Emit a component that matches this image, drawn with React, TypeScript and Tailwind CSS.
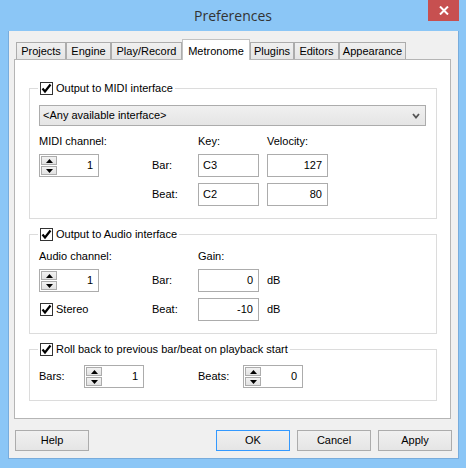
import React from "react";

const Check = () => (
  <span className="flex h-[13px] w-[13px] shrink-0 items-center justify-center border border-[#333333] bg-white">
    <svg width="11" height="11" viewBox="0 0 11 11">
      <path d="M1.5 5.5 L4 8.5 L9.5 1.5" fill="none" stroke="#000" strokeWidth="2.2" strokeLinejoin="miter" />
    </svg>
  </span>
);

const Legend = ({ children }: { children: React.ReactNode }) => (
  <legend className="ml-[8px] h-[16px] px-[2px]">
    <span className="flex h-[16px] items-center gap-[3px]">
      <Check />
      <span className="leading-[13px]">{children}</span>
    </span>
  </legend>
);

const Tri = ({ up }: { up?: boolean }) => (
  <svg width="7" height="4" viewBox="0 0 7 4">
    {up ? <path d="M0 4 L3.5 0 L7 4 Z" fill="#000" /> : <path d="M0 0 L3.5 4 L7 0 Z" fill="#000" />}
  </svg>
);

const Spinner = ({ value }: { value: string }) => (
  <div className="flex h-[23px] w-[60px] border border-[#acacac] bg-white">
    <div className="flex w-[17px] flex-col gap-[1px] py-[1px] pl-[1px]">
      <div className="flex flex-1 items-center justify-center border border-[#acacac] bg-gradient-to-b from-[#f2f2f2] to-[#e2e2e2]">
        <Tri up />
      </div>
      <div className="flex flex-1 items-center justify-center border border-[#acacac] bg-gradient-to-b from-[#f2f2f2] to-[#e2e2e2]">
        <Tri />
      </div>
    </div>
    <div className="flex flex-1 items-center justify-end pr-[5px]">{value}</div>
  </div>
);

const Input = ({ value, left }: { value: string; left?: boolean }) => (
  <div
    className={
      "flex h-[23px] w-[61px] items-center border border-[#acacac] bg-white " +
      (left ? "justify-start pl-[4px]" : "justify-end pr-[5px]")
    }
  >
    {value}
  </div>
);

const Btn = ({ label, def }: { label: string; def?: boolean }) => (
  <div
    className={
      "flex h-[21px] w-[74px] items-center justify-center border bg-gradient-to-b from-[#f0f0f0] to-[#e5e5e5] " +
      (def ? "border-[#3399ff]" : "border-[#acacac]")
    }
  >
    {label}
  </div>
);

const tabs: { label: string; w: string; sel?: boolean }[] = [
  { label: "Projects", w: "w-[50px]" },
  { label: "Engine", w: "w-[45px]" },
  { label: "Play/Record", w: "w-[71px]" },
  { label: "Metronome", w: "w-[68px]", sel: true },
  { label: "Plugins", w: "w-[44px]" },
  { label: "Editors", w: "w-[45px]" },
  { label: "Appearance", w: "w-[67px]" },
];

export default function App() {
  return (
    <div className="flex h-[468px] w-[466px] flex-col bg-[#8bc6f6] font-['Liberation_Sans',Arial,sans-serif] text-[11px] text-black">
      {/* Title bar */}
      <div className="relative flex h-[31px] shrink-0 items-center justify-center">
        <span className="pb-[1px] font-['Open_Sans',sans-serif] text-[14px] text-[#333333]">Preferences</span>
        <div className="absolute right-[7px] top-0 flex h-[21px] w-[31px] items-center justify-center bg-[#c75050]">
          <svg width="10" height="9" viewBox="0 0 10 9">
            <path d="M1 0.5 L9 8.5 M9 0.5 L1 8.5" stroke="#fff" strokeWidth="2" />
          </svg>
        </div>
      </div>

      {/* Client */}
      <div className="ml-[8px] flex h-[428px] w-[451px] flex-col border border-[#78acdc] border-t-0 bg-[#f0f0f0] pl-[5px] pt-[8px]">
        {/* Tabs */}
        <div className="ml-[2px] flex items-end">
          {tabs.map((t) =>
            t.sel ? (
              <div
                key={t.label}
                className={`${t.w} relative z-10 -mb-[1px] flex h-[21px] items-start justify-center border border-b-0 border-[#c2c2c2] bg-white pt-[3px]`}
              >
                {t.label}
              </div>
            ) : (
              <div
                key={t.label}
                className={`${t.w} flex h-[17px] items-center justify-center border border-b-0 border-[#acacac] bg-gradient-to-b from-[#f0f0f0] to-[#e5e5e5] pt-[1px]`}
              >
                {t.label}
              </div>
            )
          )}
        </div>

        {/* Panel */}
        <div className="h-[360px] w-[437px] border border-[#b5b5b5] bg-white pl-[14px] pt-[20px]">
          {/* Group 1 */}
          <fieldset className="w-[408px] border border-[#dcdcdc]">
            <Legend>Output to MIDI interface</Legend>
            <div className="px-[9px] pb-[12px]">
              <div className="mt-[9px] flex h-[21px] w-[387px] items-center justify-between border border-[#acacac] bg-gradient-to-b from-[#f0f0f0] to-[#e5e5e5] pl-[3px] pr-[5px]">
                <span>&lt;Any available interface&gt;</span>
                <svg width="8" height="6" viewBox="0 0 8 6">
                  <path d="M1 1 L4 4.5 L7 1" fill="none" stroke="#555" strokeWidth="1.8" />
                </svg>
              </div>
              <div className="mt-[9px] grid grid-cols-[113px_46px_69px_61px] grid-rows-[13px_23px_23px] gap-y-[6px] leading-[13px]">
                <div>MIDI channel:</div>
                <div />
                <div>Key:</div>
                <div>Velocity:</div>

                <Spinner value="1" />
                <div className="flex items-center">Bar:</div>
                <Input value="C3" left />
                <Input value="127" />

                <div />
                <div className="flex items-center">Beat:</div>
                <Input value="C2" left />
                <Input value="80" />
              </div>
            </div>
          </fieldset>

          {/* Group 2 */}
          <fieldset className="mt-[7px] w-[408px] border border-[#dcdcdc]">
            <Legend>Output to Audio interface</Legend>
            <div className="px-[9px] pb-[12px]">
              <div className="mt-[8px] grid grid-cols-[113px_46px_69px_61px] grid-rows-[13px_23px_23px] gap-y-[6px] leading-[13px]">
                <div>Audio channel:</div>
                <div />
                <div>Gain:</div>
                <div />

                <Spinner value="1" />
                <div className="flex items-center">Bar:</div>
                <Input value="0" />
                <div className="flex items-center">dB</div>

                <div className="flex items-center gap-[3px] pl-[1px]">
                  <Check />
                  <span>Stereo</span>
                </div>
                <div className="flex items-center">Beat:</div>
                <Input value="-10" />
                <div className="flex items-center">dB</div>
              </div>
            </div>
          </fieldset>

          {/* Group 3 */}
          <fieldset className="mt-[7px] w-[408px] border border-[#dcdcdc]">
            <Legend>Roll back to previous bar/beat on playback start</Legend>
            <div className="px-[9px] pb-[12px]">
              <div className="mt-[8px] grid grid-cols-[45px_114px_45px_61px] grid-rows-[23px] leading-[13px]">
                <div className="flex items-center">Bars:</div>
                <Spinner value="1" />
                <div className="flex items-center">Beats:</div>
                <Spinner value="0" />
              </div>
            </div>
          </fieldset>
        </div>

        {/* Buttons */}
        <div className="ml-[1px] mt-[11px] flex w-[437px] items-center">
          <Btn label="Help" />
          <div className="ml-auto flex gap-[7px]">
            <Btn label="OK" def />
            <Btn label="Cancel" />
            <Btn label="Apply" />
          </div>
        </div>
      </div>
    </div>
  );
}
